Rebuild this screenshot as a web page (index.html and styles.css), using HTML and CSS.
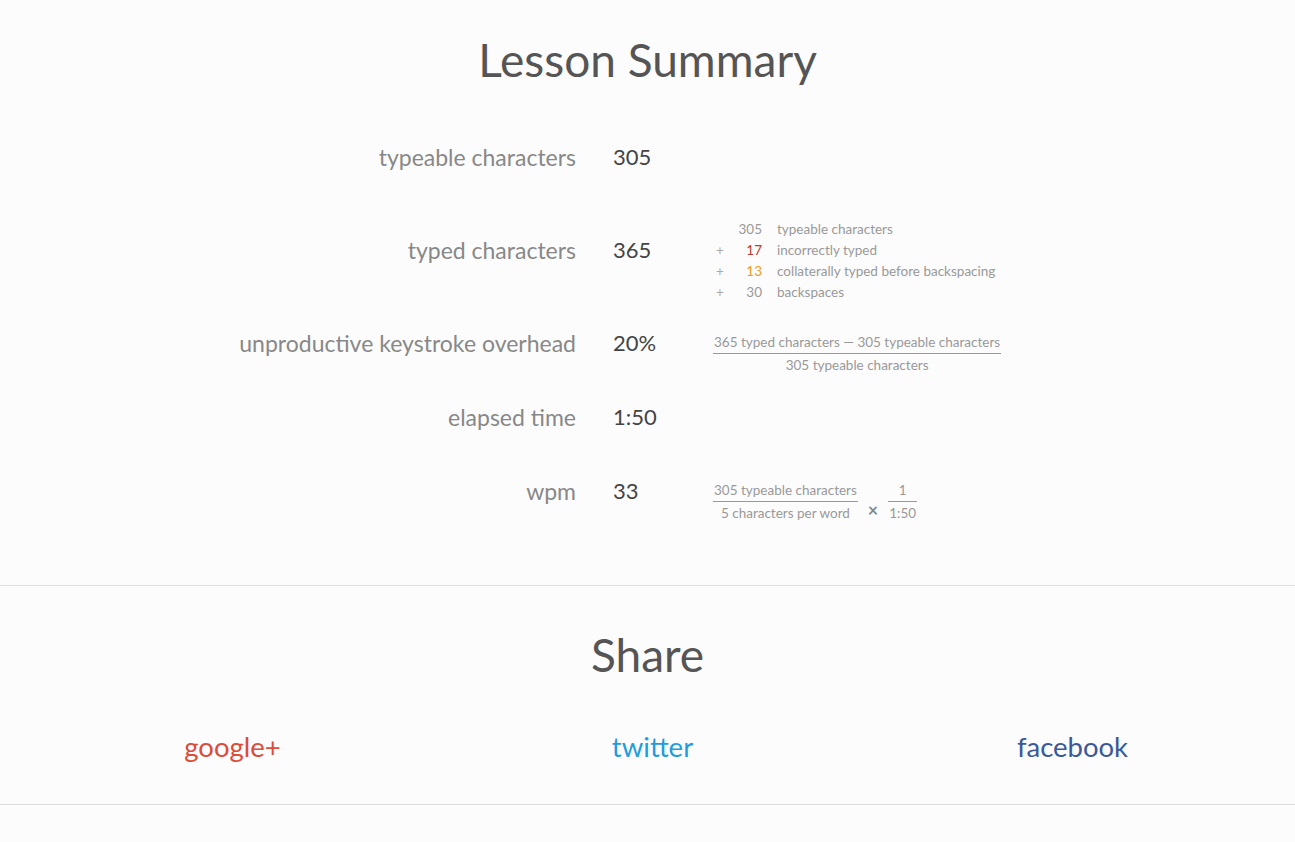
FILE: index.html
```html
<!DOCTYPE html>
<html>
<head>
<meta charset="utf-8">
<title>Lesson Summary</title>
<link rel="stylesheet" href="styles.css">
</head>
<body>
<section class="summary">
  <h1 class="title">Lesson Summary</h1>
  <div class="stats">
    <div class="row tall">
      <div class="label">typeable characters</div>
      <div class="value">305</div>
      <div class="detail"></div>
    </div>
    <div class="row tall">
      <div class="label">typed characters</div>
      <div class="value">365</div>
      <div class="detail breakdown">
        <span class="op"></span><span class="num">305</span><span class="desc">typeable characters</span>
        <span class="op">+</span><span class="num red">17</span><span class="desc">incorrectly typed</span>
        <span class="op">+</span><span class="num orange">13</span><span class="desc">collaterally typed before backspacing</span>
        <span class="op">+</span><span class="num">30</span><span class="desc">backspaces</span>
      </div>
    </div>
    <div class="row">
      <div class="label">unproductive keystroke overhead</div>
      <div class="value">20%</div>
      <div class="detail formula">
        <div class="frac">
          <div class="numer">365 typed characters — 305 typeable characters</div>
          <div class="denom">305 typeable characters</div>
        </div>
      </div>
    </div>
    <div class="row">
      <div class="label">elapsed time</div>
      <div class="value">1:50</div>
      <div class="detail"></div>
    </div>
    <div class="row">
      <div class="label">wpm</div>
      <div class="value">33</div>
      <div class="detail formula">
        <div class="frac">
          <div class="numer">305 typeable characters</div>
          <div class="denom">5 characters per word</div>
        </div>
        <span class="times">×</span>
        <div class="frac">
          <div class="numer">1</div>
          <div class="denom">1:50</div>
        </div>
      </div>
    </div>
  </div>
</section>
<section class="share">
  <h2 class="title">Share</h2>
  <div class="links">
    <a class="link google" href="#">google+</a>
    <a class="link twitter" href="#">twitter</a>
    <a class="link facebook" href="#">facebook</a>
  </div>
</section>
</body>
</html>
```
FILE: styles.css
```css
html, body {
  margin: 0;
  padding: 0;
}
body {
  background: #fcfcfc;
  font-family: "Lato", "Open Sans", sans-serif;
  color: #555;
}
.title {
  margin: 0;
  text-align: center;
  font-weight: 400;
  font-size: 46px;
  line-height: 58px;
  color: #555;
}
.summary {
  padding-top: 31px;
  padding-bottom: 78px;
  border-bottom: 1px solid #ddd;
}
.stats {
  margin-top: 53px;
}
.row {
  display: grid;
  grid-template-columns: 576px 137px 1fr;
  align-items: start;
  height: 74px;
}
.row.tall {
  height: 93px;
}
.row:last-child {
  height: 31px;
}
.label {
  text-align: right;
  font-size: 23px;
  line-height: 30px;
  color: #888;
}
.value {
  padding-left: 37px;
  font-size: 22px;
  line-height: 30px;
  color: #444;
}
.detail {
  font-size: 13.5px;
  color: #999;
}
.breakdown {
  display: grid;
  grid-template-columns: 14px 35px auto;
  line-height: 21px;
  margin-top: -16px;
  justify-self: start;
}
.op {
  text-align: center;
  color: #aaa;
}
.num {
  text-align: right;
}
.desc {
  padding-left: 15px;
}
.red { color: #c0392b; }
.orange { color: #f39c12; }
.formula {
  display: flex;
  align-items: center;
  margin-top: 4px;
}
.frac {
  display: flex;
  flex-direction: column;
  align-items: stretch;
  text-align: center;
  line-height: 21px;
}
.numer {
  border-bottom: 1px solid #999;
  padding: 0 1px;
}
.denom {
  padding: 1px 1px 0;
}
.times {
  font-size: 18px;
  color: #888;
  margin: 16px 10px 0 10px;
  font-weight: 700;
}
.share {
  padding-top: 40px;
  padding-bottom: 40px;
  border-bottom: 1px solid #ddd;
}
.links {
  margin: 46px auto 0;
  width: 1260px;
  display: grid;
  grid-template-columns: repeat(3, 1fr);
  transform: translateX(5px);
}
.link {
  text-align: center;
  text-decoration: none;
  font-size: 27.5px;
  line-height: 34px;
}
.google { color: #dd4b39; }
.twitter { color: #1e9de0; }
.facebook { color: #3b5998; }
```
